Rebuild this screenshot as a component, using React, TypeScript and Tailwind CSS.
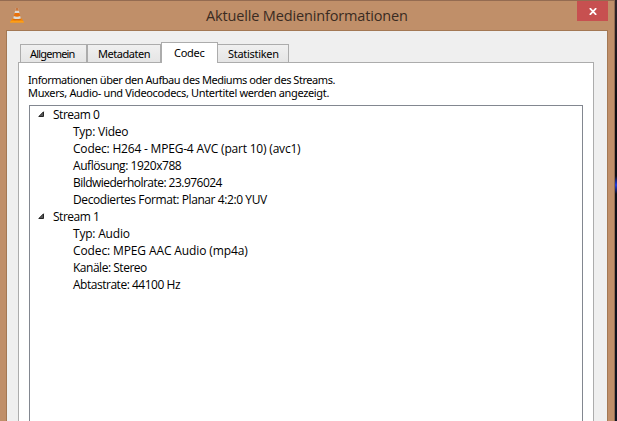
const streams = [
  {
    name: 'Stream 0',
    rows: [
      { text: 'Typ: Video', cls: 'tracking-[-0.25px]' },
      { text: 'Codec: H264 - MPEG-4 AVC (part 10) (avc1)', cls: 'tracking-[-0.2px]' },
      { text: 'Auflösung: 1920x788', cls: 'tracking-[-0.45px]' },
      { text: 'Bildwiederholrate: 23.976024', cls: 'tracking-[-0.53px]' },
      { text: 'Decodiertes Format: Planar 4:2:0 YUV', cls: 'tracking-[-0.41px]' },
    ],
  },
  {
    name: 'Stream 1',
    rows: [
      { text: 'Typ: Audio', cls: 'tracking-[-0.2px]' },
      { text: 'Codec: MPEG AAC Audio (mp4a)', cls: 'tracking-[-0.12px]' },
      { text: 'Kanäle: Stereo', cls: 'tracking-[-0.48px]' },
      { text: 'Abtastrate: 44100 Hz', cls: 'tracking-[-0.48px]' },
    ],
  },
];

function Cone() {
  return (
    <svg width="14" height="16" viewBox="0 0 14 16" className="ml-[10px] mt-[6px] shrink-0">
      <path d="M2.2 11.5h9.6L14 15.6H0z" fill="#f58a08" />
      <path d="M.5 14.2h13l.5 1.2H0z" fill="#ffa51c" />
      <path d="M5.8 1h2.4L11 12.4q-4 1.6-8 0z" fill="#dedbd5" />
      <path d="M5.8 1h2.4l.7 2.7H5.1z" fill="#c9773f" />
      <path d="M4.5 6h5l.8 3q-3.3 1.3-6.6 0z" fill="#e8710c" />
      <path d="M3.2 11.4q3.8 1.2 7.6 0l.4 1.4q-4.2 1.6-8.4 0z" fill="#d96d0c" />
    </svg>
  );
}

function Stream({ name, rows }: (typeof streams)[number]) {
  return (
    <div>
      <div className="flex h-[17px] items-center">
        <svg width="7" height="7" viewBox="0 0 7 7" className="ml-[8px] mr-[8px]">
          <path d="M5.5 .8V5.5H.8z" fill="#595959" stroke="#262626" />
        </svg>
        <span className="tracking-[-0.48px]">{name}</span>
      </div>
      {rows.map((r) => (
        <div key={r.text} className="h-[17px] pl-[43px]">
          <span className={r.cls}>{r.text}</span>
        </div>
      ))}
    </div>
  );
}

const tabBase = 'flex border border-b-0 border-[#acacac] bg-linear-to-b from-[#f0f0f0] to-[#e5e5e5] h-[18px] leading-[18px]';

export default function App() {
  return (
    <div className="flex h-[421px] w-[617px] overflow-hidden bg-[#0e0e12] font-['Open_Sans','Noto_Sans',sans-serif] text-[12px] leading-[17px] whitespace-nowrap text-black">
      <div className="flex w-[615px] flex-col border-t border-r border-[#946b51] bg-[#c08f69]">
        <header className="flex h-[29px] shrink-0">
          <Cone />
          <h1 className="ml-[182px] flex-1 pt-[5px] text-[14.5px] leading-[20px] text-[#3a2b22] tracking-[-0.15px]">Aktuelle Medieninformationen</h1>
          <button className="mr-[6px] flex h-[20px] w-[31px] items-center justify-center bg-[#c75050]">
            <svg width="8" height="7" viewBox="0 0 8 7">
              <path d="M.8.2 7.2 6.8M7.2.2.8 6.8" stroke="#fff" strokeWidth="1.8" />
            </svg>
          </button>
        </header>
        <main className="ml-[6px] flex min-h-0 w-[602px] flex-1 flex-col border-x border-t border-[#a37854] bg-[#efefef] pl-[11px]">
          <nav className="z-10 mb-[-1px] ml-[2px] mt-[11px] flex h-[21px] items-end font-['Noto_Sans',sans-serif] text-[11px]">
            <div className={`${tabBase} mb-px w-[67px] pl-[9px]`}>
              <span className="tracking-[-0.8px]">Allgemein</span>
            </div>
            <div className={`${tabBase} mb-px w-[74px] pl-[10px]`}>
              <span className="tracking-[-0.45px]">Metadaten</span>
            </div>
            <div className="flex h-[21px] w-[57px] border border-b-0 border-[#acacac] bg-white pl-[12px] leading-[20px]">
              <span className="tracking-[-0.25px]">Codec</span>
            </div>
            <div className={`${tabBase} mb-px w-[71px] border-l-0 pl-[10px]`}>
              <span className="tracking-[-0.3px]">Statistiken</span>
            </div>
          </nav>
          <section className="flex min-h-0 w-[576px] flex-1 flex-col border-x border-t border-[#acacac] bg-white pl-[10px]">
            <div className="-ml-px h-[42px] shrink-0 pt-[10px] font-['Noto_Sans',sans-serif] text-[11px] leading-[13px]">
              <p className="tracking-[-0.45px]">Informationen über den Aufbau des Mediums oder des Streams.</p>
              <p className="tracking-[-0.35px]">Muxers, Audio- und Videocodecs, Untertitel werden angezeigt.</p>
            </div>
            <div className="w-[554px] flex-1 border-x border-t border-[#828790]">
              {streams.map((s) => (
                <Stream key={s.name} {...s} />
              ))}
            </div>
          </section>
        </main>
      </div>
      <div className="h-[421px] w-[2px] bg-linear-to-b from-[#30242a] from-0% via-[#0c0c10] via-25% to-[#101522]">
        <div className="mt-[176px] h-[18px] bg-linear-to-b from-transparent via-[#203be0] to-transparent" />
      </div>
    </div>
  );
}
